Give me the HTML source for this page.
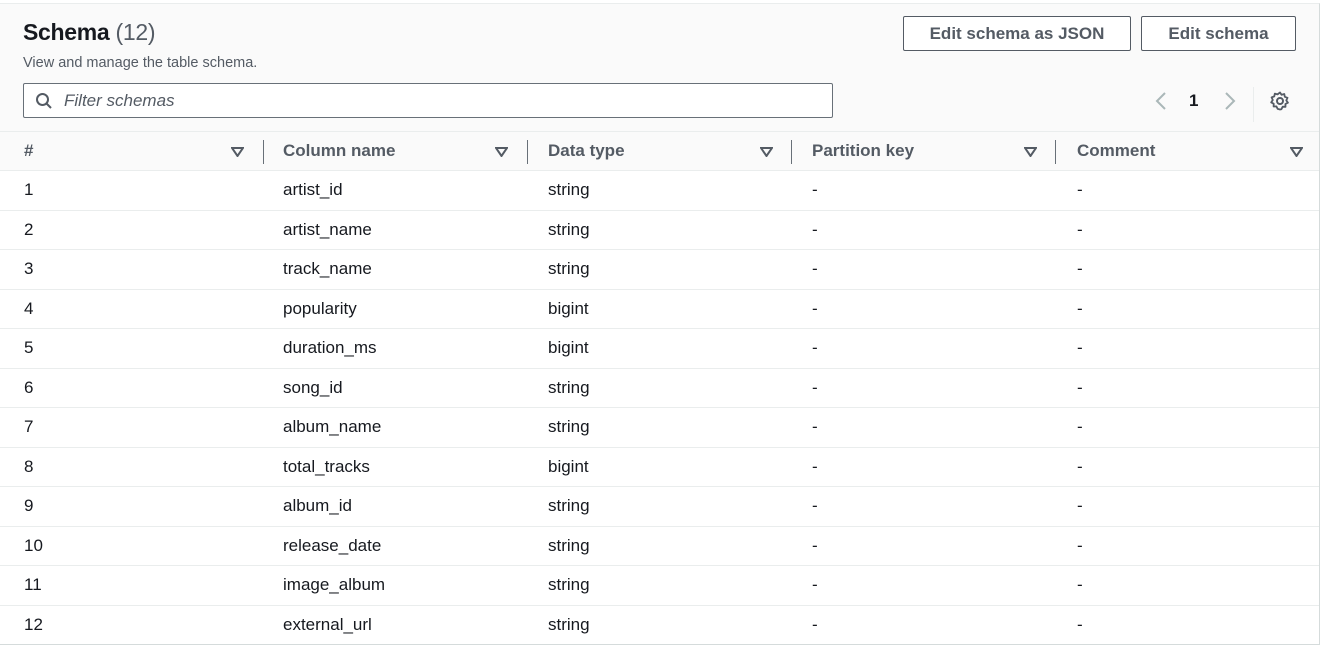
<!DOCTYPE html>
<html><head><style>
*{box-sizing:border-box;margin:0;padding:0}
body{width:1323px;height:647px;background:#fff;font-family:"Liberation Sans",sans-serif;color:#16191f;position:relative;overflow:hidden}
.card{position:absolute;left:0;top:3px;width:1320px;height:642px;border-right:1px solid #d5dbdb;border-bottom:1px solid #d5dbdb;border-top:1px solid #eaeded;background:#fff}
.head{position:absolute;left:0;top:0;width:100%;height:127px;background:#fafafa}
h1{position:absolute;left:23px;top:15px;font-size:23px;font-weight:bold;letter-spacing:-0.3px}
h1 span{font-weight:normal;color:#545b64}
.desc{position:absolute;left:23px;top:51px;font-size:14.5px;color:#545b64}
.search{position:absolute;left:23px;top:79px;width:810px;height:35px;border:1px solid #687078;border-radius:2px;background:#fff}
.search i{position:absolute;left:40px;top:7px;font-size:17px;color:#545b64}
.btn{position:absolute;top:12px;height:35px;border:1px solid #545b64;border-radius:2px;background:#fff;font-size:17px;font-weight:bold;color:#545b64;text-align:center;line-height:33px}
.pg{position:absolute;left:1189px;top:87px;font-size:17px;font-weight:bold}
.vsep{position:absolute;left:1253px;top:83px;width:1px;height:35px;background:#eaeded}
.th{position:absolute;top:127px;left:0;width:100%;height:40px;background:#fafafa;border-top:1px solid #eaeded;border-bottom:1px solid #eaeded}
.th div{position:absolute;top:9px;font-size:17px;font-weight:bold;color:#545b64}
.th .s{position:absolute;top:8px;width:1px;height:24px;background:#687078}
.th svg{position:absolute;top:15px}
.row{position:absolute;left:0;width:100%;height:39.5px;border-bottom:1px solid #eaeded;font-size:17px}
.row div{position:absolute;top:9px}
</style></head><body>
<div class="card">
<div class="head">
<h1>Schema <span>(12)</span></h1>
<div class="desc">View and manage the table schema.</div>
<div class="search"><svg style="position:absolute;left:11px;top:8px" width="18" height="18" viewBox="0 0 18 18"><circle cx="7.5" cy="7.5" r="5.5" fill="none" stroke="#545b64" stroke-width="2"/><line x1="11.5" y1="11.5" x2="16" y2="16" stroke="#545b64" stroke-width="2"/></svg><i>Filter schemas</i></div>
<div class="btn" style="left:903px;width:228px">Edit schema as JSON</div>
<div class="btn" style="left:1141px;width:155px">Edit schema</div>
<svg style="position:absolute;left:1155px;top:87px" width="12" height="20" viewBox="0 0 12 20"><polyline points="10,2 2,10 10,18" fill="none" stroke="#aab7b8" stroke-width="2"/></svg>
<div class="pg">1</div>
<svg style="position:absolute;left:1224px;top:87px" width="12" height="20" viewBox="0 0 12 20"><polyline points="2,2 10,10 2,18" fill="none" stroke="#aab7b8" stroke-width="2"/></svg>
<div class="vsep"></div>
<svg style="position:absolute;left:1270px;top:87px" width="20" height="20" viewBox="0 0 20 20"><circle cx="10" cy="10" r="3" fill="none" stroke="#545b64" stroke-width="2"/><path d="M10 1.5l1.6 2.3 2.7-.8.5 2.8 2.7 1-1.2 2.6 1.6 2.3-2.5 1.3.1 2.8-2.8-.1-1.3 2.5L10 18.5 7.7 17.9l-1.3-2.5-2.8.1.1-2.8L1.2 11.4 2.8 9 1.6 6.4l2.7-1 .5-2.8 2.7.8z" fill="none" stroke="#545b64" stroke-width="1.8" stroke-linejoin="round"/></svg>
</div>
<div class="th">
<div style="left:24px">#</div>
<div style="left:283px">Column name</div>
<div style="left:548px">Data type</div>
<div style="left:812px">Partition key</div>
<div style="left:1077px">Comment</div>
<span class="s" style="left:263px"></span><span class="s" style="left:527px"></span><span class="s" style="left:791px"></span><span class="s" style="left:1055px"></span>
<svg style="left:231px" width="13" height="10"><polygon points="1,1 12,1 6.5,9" fill="none" stroke="#545b64" stroke-width="2"/></svg>
<svg style="left:495px" width="13" height="10"><polygon points="1,1 12,1 6.5,9" fill="none" stroke="#545b64" stroke-width="2"/></svg>
<svg style="left:760px" width="13" height="10"><polygon points="1,1 12,1 6.5,9" fill="none" stroke="#545b64" stroke-width="2"/></svg>
<svg style="left:1024px" width="13" height="10"><polygon points="1,1 12,1 6.5,9" fill="none" stroke="#545b64" stroke-width="2"/></svg>
<svg style="left:1290px" width="13" height="10"><polygon points="1,1 12,1 6.5,9" fill="none" stroke="#545b64" stroke-width="2"/></svg>
</div>
<div class="row" style="top:167px"><div style="left:24px">1</div><div style="left:283px">artist_id</div><div style="left:548px">string</div><div style="left:812px">-</div><div style="left:1077px">-</div></div>
<div class="row" style="top:206.5px"><div style="left:24px">2</div><div style="left:283px">artist_name</div><div style="left:548px">string</div><div style="left:812px">-</div><div style="left:1077px">-</div></div>
<div class="row" style="top:246px"><div style="left:24px">3</div><div style="left:283px">track_name</div><div style="left:548px">string</div><div style="left:812px">-</div><div style="left:1077px">-</div></div>
<div class="row" style="top:285.5px"><div style="left:24px">4</div><div style="left:283px">popularity</div><div style="left:548px">bigint</div><div style="left:812px">-</div><div style="left:1077px">-</div></div>
<div class="row" style="top:325px"><div style="left:24px">5</div><div style="left:283px">duration_ms</div><div style="left:548px">bigint</div><div style="left:812px">-</div><div style="left:1077px">-</div></div>
<div class="row" style="top:364.5px"><div style="left:24px">6</div><div style="left:283px">song_id</div><div style="left:548px">string</div><div style="left:812px">-</div><div style="left:1077px">-</div></div>
<div class="row" style="top:404px"><div style="left:24px">7</div><div style="left:283px">album_name</div><div style="left:548px">string</div><div style="left:812px">-</div><div style="left:1077px">-</div></div>
<div class="row" style="top:443.5px"><div style="left:24px">8</div><div style="left:283px">total_tracks</div><div style="left:548px">bigint</div><div style="left:812px">-</div><div style="left:1077px">-</div></div>
<div class="row" style="top:483px"><div style="left:24px">9</div><div style="left:283px">album_id</div><div style="left:548px">string</div><div style="left:812px">-</div><div style="left:1077px">-</div></div>
<div class="row" style="top:522.5px"><div style="left:24px">10</div><div style="left:283px">release_date</div><div style="left:548px">string</div><div style="left:812px">-</div><div style="left:1077px">-</div></div>
<div class="row" style="top:562px"><div style="left:24px">11</div><div style="left:283px">image_album</div><div style="left:548px">string</div><div style="left:812px">-</div><div style="left:1077px">-</div></div>
<div class="row" style="top:601.5px;border-bottom:none"><div style="left:24px">12</div><div style="left:283px">external_url</div><div style="left:548px">string</div><div style="left:812px">-</div><div style="left:1077px">-</div></div>
</div>
</body></html>
